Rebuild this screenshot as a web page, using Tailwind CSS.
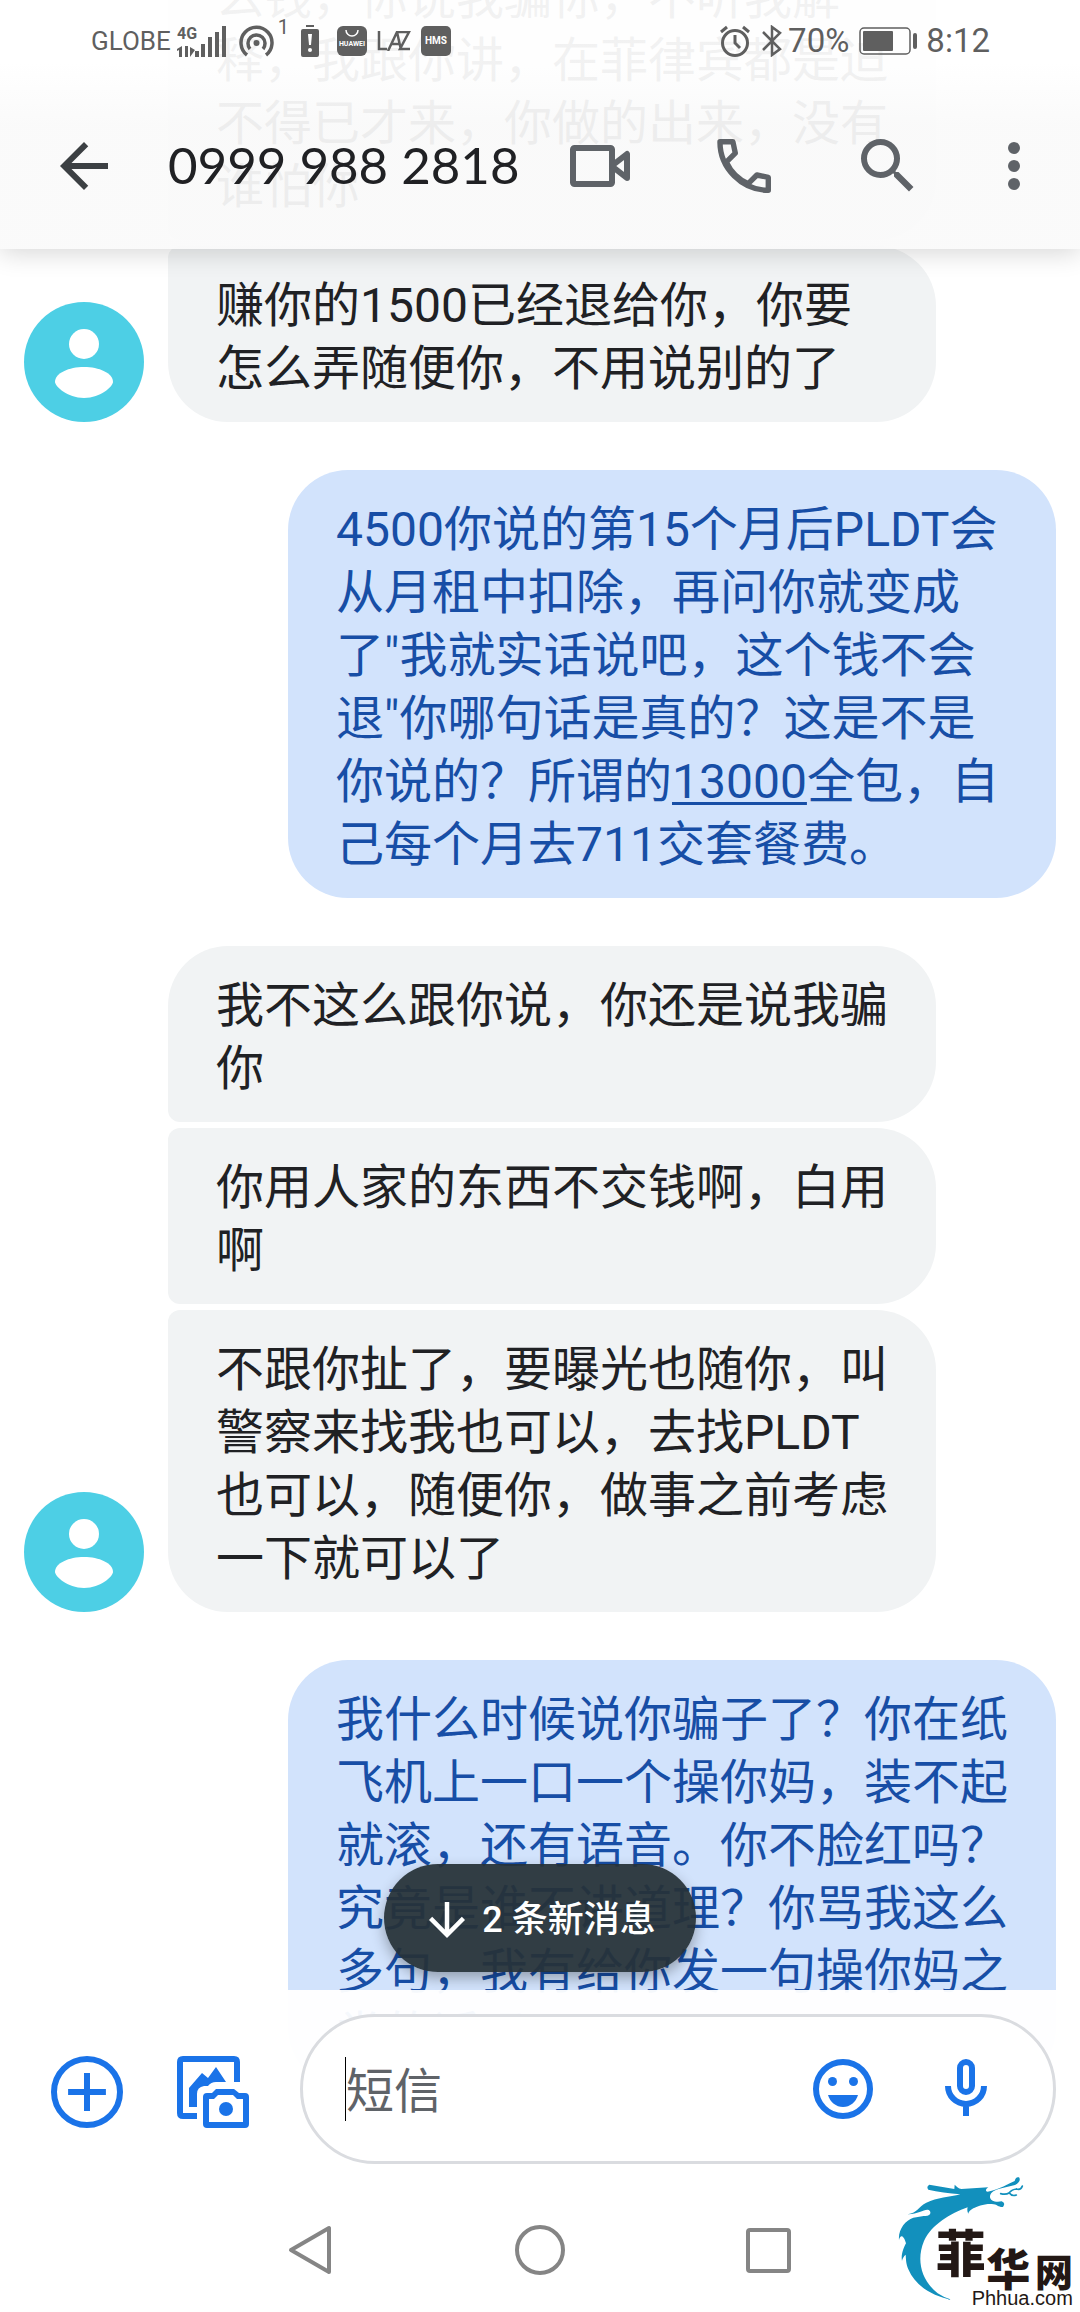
<!DOCTYPE html>
<html lang="zh-CN">
<head>
  <meta charset="UTF-8" />
  <meta name="viewport" content="width=device-width, initial-scale=1.0"/>
  <title>0999 988 2818</title>
  <script src="https://cdn.jsdelivr.net/npm/@tailwindcss/browser@4"></script>
</head>
<body class="grid h-screen grid-cols-1 grid-rows-[auto_1fr_auto] overflow-hidden bg-white font-['Roboto','Noto_Sans_CJK_SC',sans-serif] text-[#202124]">

  <!-- Messages, scrolling under the header and the composer -->
  <main class="col-start-1 row-start-1 row-span-3 flex flex-col justify-end gap-12 overflow-hidden px-6 pb-56 text-5xl/[63px]">

    <section class="flex shrink-0 items-end gap-6">
      <svg class="size-[120px] shrink-0" viewBox="0 0 120 120" role="img" aria-label="联系人">
        <circle cx="60" cy="60" r="60" fill="#4dcfe5"/>
        <circle cx="60" cy="42" r="15" fill="#fff"/>
        <path d="M60 65c15 0 29 6 29 15 0 4-12 16-29 16S31 84 31 80c0-9 14-15 29-15z" fill="#fff"/>
      </svg>
      <div class="flex w-full max-w-3xl flex-col gap-1.5">
        <p class="rounded-[60px] rounded-bl-xl bg-[#f1f3f4] px-12 pt-7 pb-[22px]">么钱，你说我骗你，不听我解释，我跟你讲，在菲律宾都是迫不得已才来，你做的出来，没有谁怕你</p>
        <p class="rounded-[60px] rounded-tl-xl bg-[#f1f3f4] px-12 pt-7 pb-[22px]">赚你的1500已经退给你，你要怎么弄随便你，不用说别的了</p>
      </div>
    </section>

    <section class="flex shrink-0 justify-end">
      <p class="w-full max-w-3xl rounded-[60px] bg-[#d2e3fc] px-12 pt-7 pb-[22px] text-[#174ea6]">4500你说的第15个月后PLDT会从月租中扣除，再问你就变成了"我就实话说吧，这个钱不会退"你哪句话是真的？这是不是你说的？所谓的<a href="tel:13000" class="underline decoration-3 underline-offset-4">13000</a>全包，自己每个月去711交套餐费。</p>
    </section>

    <section class="flex shrink-0 items-end gap-6">
      <svg class="size-[120px] shrink-0" viewBox="0 0 120 120" role="img" aria-label="联系人">
        <circle cx="60" cy="60" r="60" fill="#4dcfe5"/>
        <circle cx="60" cy="42" r="15" fill="#fff"/>
        <path d="M60 65c15 0 29 6 29 15 0 4-12 16-29 16S31 84 31 80c0-9 14-15 29-15z" fill="#fff"/>
      </svg>
      <div class="flex w-full max-w-3xl flex-col gap-1.5">
        <p class="rounded-[60px] rounded-bl-xl bg-[#f1f3f4] px-12 pt-7 pb-[22px]">我不这么跟你说，你还是说我骗你</p>
        <p class="rounded-[60px] rounded-l-xl bg-[#f1f3f4] px-12 pt-7 pb-[22px]">你用人家的东西不交钱啊，白用啊</p>
        <p class="rounded-[60px] rounded-tl-xl bg-[#f1f3f4] px-12 pt-7 pb-[22px]">不跟你扯了，要曝光也随你，叫警察来找我也可以，去找PLDT也可以，随便你，做事之前考虑一下就可以了</p>
      </div>
    </section>

    <section class="flex shrink-0 justify-end">
      <p class="w-full max-w-3xl rounded-[60px] bg-[#d2e3fc] px-12 pt-7 pb-[22px] text-[#174ea6]">我什么时候说你骗子了？你在纸飞机上一口一个操你妈，装不起就滚，还有语音。你不脸红吗？究竟是谁不讲道理？你骂我这么多句，我有给你发一句操你妈之类的话吗</p>
    </section>
  </main>

  <!-- Header -->
  <header class="z-10 col-start-1 row-start-1 bg-linear-to-b from-white/94 from-25% to-[#fafafa]/94 to-50% shadow-[0_4px_24px_rgba(0,0,0,0.16)]">

    <!-- Status bar -->
    <div class="flex h-[82px] items-center pr-[90px] pl-[91px] text-[#5f5f5f]">
      <span class="text-[26px]">GLOBE</span>
      <svg class="ml-1.5 h-8 w-[50px]" viewBox="0 0 50 32" fill="currentColor">
        <text x="0" y="14" font-size="16" font-weight="700">4G</text>
        <path d="M5 21v11H2v-7l-2 1v-2zM8 21h3v11H8zM13 22v10l5-7zM18 26h4v6h-4zM24 19h4v13h-4zM31 12h4v20h-4zM38 7h4v25h-4zM45 1h4v31h-4z"/>
      </svg>
      <svg class="ml-3 h-8 w-[35px]" viewBox="0 0 35 32" fill="none" stroke="currentColor" stroke-width="3.5">
        <path d="M8 30a15.500 15.500 0 1 1 19 0"/>
        <path d="M11 24a8.500 8.500 0 1 1 13 0"/>
        <circle cx="17.500" cy="18" r="3" fill="currentColor" stroke="none"/>
      </svg>
      <span class="mb-7 ml-1 text-xl/5">1</span>
      <svg class="ml-3 h-8 w-[18px]" viewBox="0 0 18 32" fill="currentColor">
        <path d="M5 0h8v2H5zM2 4h14q2 0 2 2v24q0 2-2 2H2q-2 0-2-2V6q0-2 2-2z"/>
        <path d="M7 9h4l-1 11H8z" fill="#fff"/>
        <circle cx="9" cy="25" r="2" fill="#fff"/>
      </svg>
      <svg class="ml-[18px] size-[30px]" viewBox="0 0 30 30" fill="currentColor">
        <rect width="30" height="30" rx="6"/>
        <path d="M9 4a6 6 0 0 0 12 0" fill="none" stroke="#fff" stroke-width="1.500"/>
        <text x="15" y="20" text-anchor="middle" font-size="7" font-weight="700" fill="#fff">HUAWEI</text>
      </svg>
      <svg class="ml-[10px] h-5 w-[34px]" viewBox="0 0 34 20" fill="none" stroke="currentColor" stroke-width="2.500">
        <path d="M2 0v18h8M11 20 20 1l4 18M15 13h7M20 1h12L23 18h10"/>
      </svg>
      <svg class="ml-[10px] size-[30px]" viewBox="0 0 30 30" fill="currentColor">
        <rect width="30" height="30" rx="5"/>
        <text x="15" y="18" text-anchor="middle" font-size="10" font-weight="700" fill="#fff">HMS</text>
      </svg>

      <svg class="ml-auto h-8 w-[30px]" viewBox="0 0 30 32" fill="none" stroke="currentColor" stroke-width="3">
        <circle cx="15" cy="18" r="12.500"/>
        <path d="M15 10v8l5 5M1 7l6-5M29 7l-6-5"/>
      </svg>
      <svg class="ml-3 h-8 w-5" viewBox="0 0 20 32" fill="none" stroke="currentColor" stroke-width="2.500">
        <path d="M1 7l17 17-8 6V2l8 6L1 25"/>
      </svg>
      <span class="ml-1.5 text-[33px]">70%</span>
      <svg class="ml-2.5 h-7 w-[59px]" viewBox="0 0 59 28">
        <rect x="1" y="1" width="50" height="26" rx="4" fill="none" stroke="currentColor" stroke-width="1.500"/>
        <rect x="4" y="4" width="30" height="20" rx="1" fill="currentColor"/>
        <rect x="54" y="6" width="4" height="16" rx="2" fill="currentColor"/>
      </svg>
      <span class="ml-2 text-[33px]">8:12</span>
    </div>

    <!-- Toolbar -->
    <div class="flex h-[167px] items-center pr-[30px] pl-12 text-[#5f6368]">
      <button type="button" aria-label="返回" class="text-[#3c4043]">
        <svg class="size-[72px]" viewBox="0 0 24 24" fill="currentColor"><path d="M20 11H7.830l5.590-5.590L12 4l-8 8 8 8 1.410-1.410L7.830 13H20z"/></svg>
      </button>
      <h1 class="ml-12 flex-1 font-['Lato',sans-serif] text-[51px] whitespace-nowrap text-[#202124]">0999 988 2818</h1>
      <div class="flex items-center gap-[72px]">
        <button type="button" aria-label="视频通话">
          <svg class="size-[72px]" viewBox="0 0 24 24" fill="none" stroke="currentColor" stroke-width="2" stroke-linejoin="round"><rect x="3" y="6" width="13" height="12" rx=".5"/><path d="M16.500 11.500 21 8v8l-4.500-3.500z"/></svg>
        </button>
        <button type="button" aria-label="拨打电话">
          <svg class="size-[72px]" viewBox="0 0 24 24" fill="none" stroke="currentColor" stroke-width="1.800" stroke-linejoin="round"><path d="M4 3.900h4.300l.8 3.800-3 3C7.600 13.900 10.200 16.500 13.400 17.900l2.900-2.900 3.800.8v4.300C11.300 20.100 3.900 12.700 4 3.900z"/></svg>
        </button>
        <button type="button" aria-label="搜索">
          <svg class="size-[72px]" viewBox="0 0 24 24" fill="currentColor"><path d="M15.500 14h-.79l-.28-.27A6.471 6.471 0 0 0 16 9.500 6.500 6.500 0 1 0 9.500 16c1.610 0 3.090-.59 4.230-1.570l.27.28v.79l5 4.990L20.490 19zm-6 0C7.010 14 5 11.990 5 9.500S7.010 5 9.500 5 14 7.010 14 9.500 11.990 14 9.500 14z"/></svg>
        </button>
      </div>
      <button type="button" aria-label="更多选项" class="ml-[54px]">
        <svg class="size-[72px]" viewBox="0 0 24 24" fill="currentColor"><circle cx="12" cy="6" r="2"/><circle cx="12" cy="12" r="2"/><circle cx="12" cy="18" r="2"/></svg>
      </button>
    </div>
  </header>

  <!-- New messages chip -->
  <button type="button" class="z-10 col-start-1 row-start-2 mb-[18px] flex h-27 items-center gap-2 self-end justify-self-center rounded-full bg-[#263238]/94 px-9 pt-1 text-4xl font-medium text-white shadow-[0_6px_14px_rgba(0,0,0,0.3)]">
    <svg class="size-[54px]" viewBox="0 0 24 24" fill="currentColor"><path d="m20 12-1.410-1.410L13 16.170V4h-2v12.170l-5.580-5.590L4 12l8 8z"/></svg>
    <span class="pr-1">2 条新消息</span>
  </button>

  <footer class="z-10 col-start-1 row-start-3 bg-white/96">

    <!-- Composer -->
    <form class="flex items-center pt-6 pr-6 pl-[51px] text-[#1a73e8]">
      <div class="flex gap-[54px] pt-1.5">
        <button type="button" aria-label="添加附件">
          <svg class="size-[72px]" viewBox="0 0 24 24" fill="none" stroke="currentColor" stroke-width="2"><circle cx="12" cy="12" r="11"/><path d="M12 5.700v12.600M5.700 12h12.600"/></svg>
        </button>
        <button type="button" aria-label="图库和相机">
          <svg class="size-[72px]" viewBox="0 0 72 72" fill="currentColor">
            <path d="M6 0h51q6 0 6 6v20h-6V6H6v51h14v6H6q-6 0-6-6V6q0-6 6-6z"/>
            <path d="M12 51V32l13-15 6 5 8-11 10 15H39q-5 0-8 4h-4q-7 1-7 8v13z"/>
            <path fill-rule="evenodd" d="M39 33h18l5 4h6q4 0 4 4v27q0 4-4 4H30q-4 0-4-4V41q0-4 4-4h5zm2 6-4 4h-5v23h34V43h-6l-4-4z"/>
            <circle cx="49" cy="53" r="7"/>
          </svg>
        </button>
      </div>
      <div class="ml-[51px] flex h-[150px] flex-1 items-center gap-[51px] rounded-full border-3 border-[#dadce0] bg-white pr-[51px] pl-[42px]">
        <div class="flex min-w-0 flex-1 items-center">
          <span class="h-16 w-px bg-black"></span>
          <input type="text" aria-label="短信" placeholder="短信" class="w-full min-w-0 pt-1 text-5xl/[63px] text-[#202124] outline-none placeholder:text-[#5f6368]" />
        </div>
        <button type="button" aria-label="表情">
          <svg class="size-[72px]" viewBox="0 0 24 24" fill="currentColor"><circle cx="12" cy="12" r="9" fill="none" stroke="currentColor" stroke-width="2"/><circle cx="8.500" cy="9.500" r="1.500"/><circle cx="15.500" cy="9.500" r="1.500"/><path d="M7 14h10c-.7 2.400-2.700 4-5 4s-4.300-1.600-5-4z"/></svg>
        </button>
        <button type="button" aria-label="语音输入">
          <svg class="size-[72px]" viewBox="0 0 24 24" fill="none" stroke="currentColor" stroke-width="2"><rect x="10" y="3" width="4" height="10" rx="2"/><path d="M6 11a6 6 0 0 0 12 0M12 17v4"/></svg>
        </button>
      </div>
    </form>

    <!-- System navigation -->
    <nav class="flex h-[148px] items-center justify-center gap-[179px] pt-6 text-[#858585]">
      <button type="button" aria-label="返回">
        <svg class="size-[50px]" viewBox="0 0 50 50" fill="none" stroke="currentColor" stroke-width="4" stroke-linejoin="round"><path d="M43 3v44L5 25z"/></svg>
      </button>
      <button type="button" aria-label="主屏幕">
        <svg class="size-[50px]" viewBox="0 0 50 50" fill="none" stroke="currentColor" stroke-width="4"><circle cx="25" cy="25" r="23"/></svg>
      </button>
      <button type="button" aria-label="最近任务">
        <svg class="size-[50px]" viewBox="0 0 50 50" fill="none" stroke="currentColor" stroke-width="4"><rect x="4" y="5" width="41" height="41" rx="2"/></svg>
      </button>
    </nav>
  </footer>

  <!-- Site watermark -->
  <svg class="pointer-events-none absolute right-1.5 bottom-1 z-20 h-[133px] w-[177px]" viewBox="110 42 531 399" role="img" aria-label="菲华网 Phhua.com">
    <path fill="#1290bd" d="M276 417C215 405 165 375 144 325C136 305 137 290 136 281C130 286 126 293 125 300C121 280 131 258 137 247C129 220 120 222 116 237C113 206 134 178 159 170L190 165C207 167 213 158 209 151C199 137 178 161 142 160C172 155 174 137 198 125C230 110 268 108 300 100C266 96 232 93 204 86Q197 76 207 71L282 84L283 71C290 77 294 83 303 84L384 79C376 84 374 91 382 92C415 86 448 67 463 60Q466 46 476 49C484 59 469 71 461 73C437 80 408 82 393 96C380 115 400 126 424 121Q437 126 428 138C414 139 412 130 394 129C370 128 350 137 339 142C331 146 324 153 324 158Q319 148 322 139C270 157 214 191 191 240C166 300 185 360 232 397Q252 411 276 417z"/>
    <path fill="none" stroke="#1290bd" stroke-width="5" stroke-linecap="round" d="M421 98q16 4 25-2 9-11 23-12M447 96q8 11 21 6M468 84q14 4 18-9"/>
    <g fill="#231815" font-weight="900" font-family="'Noto Sans CJK SC', sans-serif">
      <text x="226" y="334" font-size="150">菲</text>
      <text x="378" y="375" font-size="132">华</text>
      <text x="524" y="375" font-size="114">网</text>
    </g>
    <text x="334" y="432" font-size="60" font-family="'Liberation Sans', sans-serif" fill="#231815">Phhua.com</text>
  </svg>

</body>
</html>
